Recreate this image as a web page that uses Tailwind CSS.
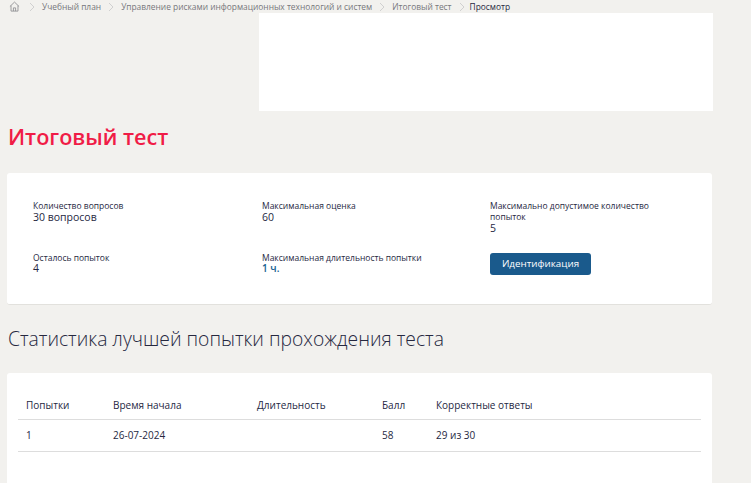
<!DOCTYPE html>
<html lang="ru">
<head>
<meta charset="utf-8">
<title>Итоговый тест</title>
<script src="https://cdn.jsdelivr.net/npm/@tailwindcss/browser@4"></script>
</head>
<body class="bg-[#f2f1ee] font-['Open_Sans',sans-serif] text-[#26283f] h-[483px] w-[751px] overflow-hidden">
  <nav class="h-[13px] pl-[9px] flex items-center gap-[7px] text-[8.4px] leading-[13px] text-[#77777c] whitespace-nowrap">
    <svg class="w-[11px] h-[11px]" viewBox="0 0 12 12" fill="none" stroke="#8a8a8e" stroke-width="0.9"><path d="M1 6 L6 1.2 L11 6 M2.2 5 V11 H9.8 V5 M4.8 11 V7.5 H7.2 V11"/></svg>
    <svg class="w-[6px] h-[10px] ml-[2px]" viewBox="0 0 6 10" fill="none" stroke="#d0d0d0"><path d="M1 1 L5 5 L1 9"/></svg>
    <span>Учебный план</span>
    <svg class="w-[6px] h-[10px]" viewBox="0 0 6 10" fill="none" stroke="#d0d0d0"><path d="M1 1 L5 5 L1 9"/></svg>
    <span>Управление рисками информационных технологий и систем</span>
    <svg class="w-[6px] h-[10px]" viewBox="0 0 6 10" fill="none" stroke="#d0d0d0"><path d="M1 1 L5 5 L1 9"/></svg>
    <span>Итоговый тест</span>
    <svg class="w-[6px] h-[10px]" viewBox="0 0 6 10" fill="none" stroke="#d0d0d0"><path d="M1 1 L5 5 L1 9"/></svg>
    <span class="text-[#26283f] -ml-[2px]">Просмотр</span>
  </nav>

  <div class="ml-[259px] w-[454px] h-[98px] bg-white"></div>

  <h1 class="ml-[8px] mt-[12px] text-[21.6px] leading-[28px] font-semibold text-[#f01c46]">Итоговый тест</h1>

  <section class="ml-[7px] mt-[22px] w-[705px] h-[132px] bg-white rounded-[3px] border-b border-[#e2e1dd] pt-[27px] pl-[26px] grid grid-cols-[229px_228px_170px] grid-rows-[53px_auto] text-[10.5px] leading-[11px]">
    <div>
      <div class="text-[8.5px]">Количество вопросов</div>
      <div class="mt-px">30 вопросов</div>
    </div>
    <div>
      <div class="text-[8.5px]">Максимальная оценка</div>
      <div class="mt-px">60</div>
    </div>
    <div>
      <div class="text-[8.5px]">Максимально допустимое количество попыток</div>
      <div class="mt-px">5</div>
    </div>
    <div>
      <div class="text-[8.5px] leading-[10px]">Осталось попыток</div>
      <div>4</div>
    </div>
    <div>
      <div class="text-[8.5px] leading-[10px]">Максимальная длительность попытки</div>
      <div class="text-[#15608f] font-semibold text-[10px]">1 ч.</div>
    </div>
    <div>
      <button class="block w-[101px] h-[22px] bg-[#1a5a8c] text-white rounded-[3px] text-[9.8px] leading-[20px]">Идентификация</button>
    </div>
  </section>

  <h2 class="ml-[8px] mt-[20px] text-[19.3px] leading-[28px] font-light text-[#26283f]">Статистика лучшей попытки прохождения теста</h2>

  <section class="ml-[7px] mt-[20px] w-[705px] h-[120px] bg-white rounded-t-[3px] pt-[19px] px-[11px] text-[10px] text-[#26283f]">
    <table class="w-[683px] table-fixed border-collapse text-left">
      <thead>
        <tr class="h-[27px] border-b border-[#dddddd]">
          <th class="w-[95px] pl-[8px] font-normal">Попытки</th>
          <th class="w-[144px] font-normal">Время начала</th>
          <th class="w-[125px] font-normal">Длительность</th>
          <th class="w-[54px] font-normal">Балл</th>
          <th class="font-normal">Корректные ответы</th>
        </tr>
      </thead>
      <tbody>
        <tr class="h-[32px] border-b border-[#dddddd]">
          <td class="pl-[8px]">1</td>
          <td>26-07-2024</td>
          <td></td>
          <td>58</td>
          <td>29 из 30</td>
        </tr>
      </tbody>
    </table>
  </section>
</body>
</html>
